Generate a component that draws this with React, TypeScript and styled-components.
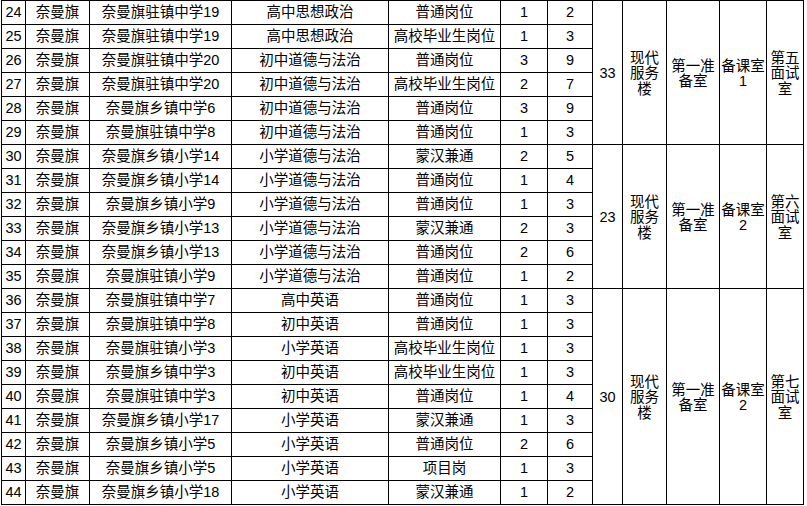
import React from "react";
import styled, { createGlobalStyle } from "styled-components";

const GlobalStyle = createGlobalStyle`
  html, body {
    margin: 0;
    padding: 0;
    background: #ffffff;
  }
  body {
    font-family: "Liberation Sans", "Noto Sans CJK SC", sans-serif;
    color: #000;
    overflow: hidden;
  }
`;

const Sheet = styled.div`
  display: grid;
  grid-template-columns: 23px 63px 141px 156px 111px 46px 44px 29px 43px 52px 46px 36px;
  grid-auto-rows: 23px;
  gap: 1px;
  padding: 1px;
  margin-left: 1px;
  width: max-content;
  background: #000;
  font-size: 14.5px;
`;

const Cell = styled.div`
  background: #fff;
  display: flex;
  align-items: center;
  justify-content: center;
  text-align: center;
  white-space: nowrap;
  line-height: 1;
`;

const MergedCell = styled.div<{ $span: number }>`
  grid-row: span ${(p) => p.$span};
  background: #fff;
  display: flex;
  align-items: center;
  justify-content: center;
  text-align: center;
  white-space: nowrap;
  line-height: 15.5px;
  padding-top: 3px;
`;

type Row = [string, string, string, string, string, string, string];

interface Group {
  rows: Row[];
  total: string;
  building: string[];
  prep: string[];
  room: string[];
  interview: string[];
}

const groups: Group[] = [
  {
    rows: [
      ["24", "奈曼旗", "奈曼旗驻镇中学19", "高中思想政治", "普通岗位", "1", "2"],
      ["25", "奈曼旗", "奈曼旗驻镇中学19", "高中思想政治", "高校毕业生岗位", "1", "3"],
      ["26", "奈曼旗", "奈曼旗驻镇中学20", "初中道德与法治", "普通岗位", "3", "9"],
      ["27", "奈曼旗", "奈曼旗驻镇中学20", "初中道德与法治", "高校毕业生岗位", "2", "7"],
      ["28", "奈曼旗", "奈曼旗乡镇中学6", "初中道德与法治", "普通岗位", "3", "9"],
      ["29", "奈曼旗", "奈曼旗驻镇中学8", "初中道德与法治", "普通岗位", "1", "3"],
    ],
    total: "33",
    building: ["现代", "服务", "楼"],
    prep: ["第一准", "备室"],
    room: ["备课室", "1"],
    interview: ["第五", "面试", "室"],
  },
  {
    rows: [
      ["30", "奈曼旗", "奈曼旗乡镇小学14", "小学道德与法治", "蒙汉兼通", "2", "5"],
      ["31", "奈曼旗", "奈曼旗乡镇小学14", "小学道德与法治", "普通岗位", "1", "4"],
      ["32", "奈曼旗", "奈曼旗乡镇小学9", "小学道德与法治", "普通岗位", "1", "3"],
      ["33", "奈曼旗", "奈曼旗乡镇小学13", "小学道德与法治", "蒙汉兼通", "2", "3"],
      ["34", "奈曼旗", "奈曼旗乡镇小学13", "小学道德与法治", "普通岗位", "2", "6"],
      ["35", "奈曼旗", "奈曼旗驻镇小学9", "小学道德与法治", "普通岗位", "1", "2"],
    ],
    total: "23",
    building: ["现代", "服务", "楼"],
    prep: ["第一准", "备室"],
    room: ["备课室", "2"],
    interview: ["第六", "面试", "室"],
  },
  {
    rows: [
      ["36", "奈曼旗", "奈曼旗驻镇中学7", "高中英语", "普通岗位", "1", "3"],
      ["37", "奈曼旗", "奈曼旗驻镇中学8", "初中英语", "普通岗位", "1", "3"],
      ["38", "奈曼旗", "奈曼旗驻镇小学3", "小学英语", "高校毕业生岗位", "1", "3"],
      ["39", "奈曼旗", "奈曼旗乡镇中学3", "初中英语", "高校毕业生岗位", "1", "3"],
      ["40", "奈曼旗", "奈曼旗驻镇中学3", "初中英语", "普通岗位", "1", "4"],
      ["41", "奈曼旗", "奈曼旗乡镇小学17", "小学英语", "蒙汉兼通", "1", "3"],
      ["42", "奈曼旗", "奈曼旗乡镇小学5", "小学英语", "普通岗位", "2", "6"],
      ["43", "奈曼旗", "奈曼旗乡镇小学5", "小学英语", "项目岗", "1", "3"],
      ["44", "奈曼旗", "奈曼旗乡镇小学18", "小学英语", "蒙汉兼通", "1", "2"],
    ],
    total: "30",
    building: ["现代", "服务", "楼"],
    prep: ["第一准", "备室"],
    room: ["备课室", "2"],
    interview: ["第七", "面试", "室"],
  },
];

const Lines: React.FC<{ lines: string[] }> = ({ lines }) => (
  <span>
    {lines.map((l, i) => (
      <React.Fragment key={i}>
        {i > 0 && <br />}
        {l}
      </React.Fragment>
    ))}
  </span>
);

export default function App() {
  return (
    <>
      <GlobalStyle />
      <Sheet>
        {groups.map((g, gi) =>
          g.rows.map((r, ri) => (
            <React.Fragment key={`${gi}-${ri}`}>
              {r.map((c, ci) => (
                <Cell key={ci}>{c}</Cell>
              ))}
              {ri === 0 && (
                <>
                  <MergedCell $span={g.rows.length}>{g.total}</MergedCell>
                  <MergedCell $span={g.rows.length}>
                    <Lines lines={g.building} />
                  </MergedCell>
                  <MergedCell $span={g.rows.length}>
                    <Lines lines={g.prep} />
                  </MergedCell>
                  <MergedCell $span={g.rows.length}>
                    <Lines lines={g.room} />
                  </MergedCell>
                  <MergedCell $span={g.rows.length}>
                    <Lines lines={g.interview} />
                  </MergedCell>
                </>
              )}
            </React.Fragment>
          ))
        )}
      </Sheet>
    </>
  );
}
